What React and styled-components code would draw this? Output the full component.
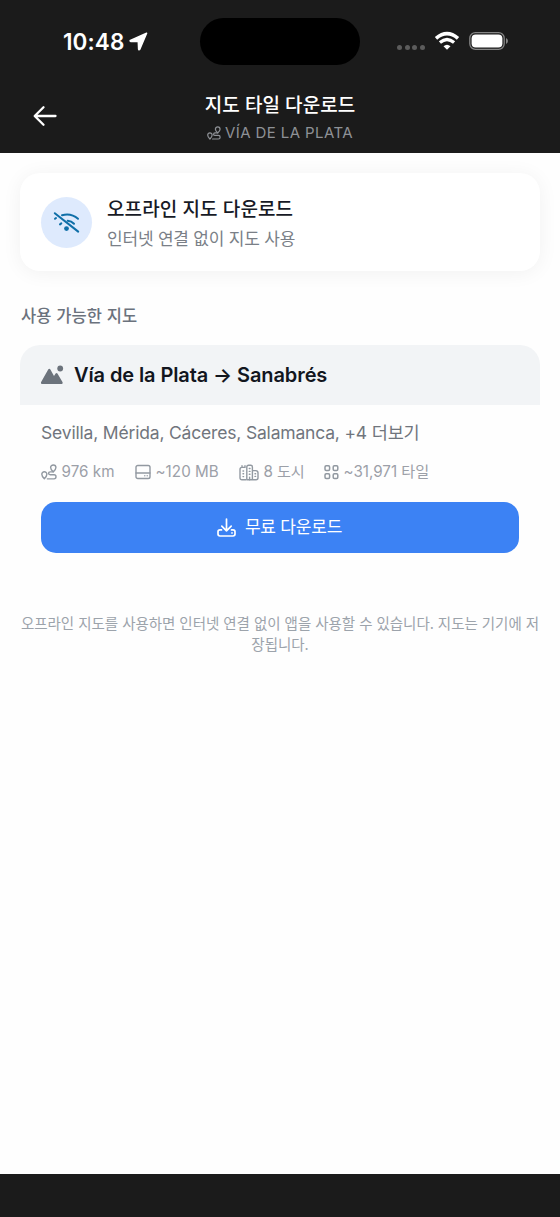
import React from "react";
import styled, { createGlobalStyle } from "styled-components";

const GlobalStyle = createGlobalStyle`
  * {
    box-sizing: border-box;
  }
  body {
    margin: 0;
    background: #ffffff;
    font-family: Inter, "Noto Sans CJK KR", sans-serif;
  }
`;

const Screen = styled.div`
  display: flex;
  flex-direction: column;
  width: 560px;
  height: 1217px;
  background: #fefefe;
`;

const TopArea = styled.header`
  flex: none;
  height: 153px;
  background: #1b1b1b;
  color: #ffffff;
`;

const StatusBar = styled.div`
  display: grid;
  grid-template-columns: 200px 160px 200px;
  align-items: center;
  height: 82px;
`;

const Clock = styled.div`
  display: flex;
  align-items: center;
  gap: 5px;
  padding-left: 63px;
  font-size: 22.5px;
  font-weight: 600;
  letter-spacing: 0.1px;
`;

const Island = styled.div`
  height: 47px;
  border-radius: 24px;
  background: #000000;
`;

const Indicators = styled.div`
  display: flex;
  align-items: center;
  padding-left: 37px;
`;

const Dots = styled.div`
  display: flex;
  gap: 2.7px;
  margin: 12px 9px 0 0;
`;

const Dot = styled.span`
  width: 5px;
  height: 5px;
  border-radius: 50%;
  background: #5c5c5c;
`;

const Battery = styled.div`
  margin-left: 9px;
`;

const NavBar = styled.div`
  display: grid;
  grid-template-columns: 90px 1fr 90px;
  height: 71px;
`;

const BackButton = styled.button`
  display: flex;
  align-items: center;
  justify-content: center;
  height: 68px;
  padding: 0;
  border: 0;
  background: none;
  color: #ffffff;
`;

const NavTitles = styled.div`
  display: flex;
  flex-direction: column;
  align-items: center;
  padding-top: 10px;
`;

const Text = styled.span`
  display: block;
  margin: 0;
  color: ${(props) => props.$color};
  font-size: ${(props) => props.$size}px;
  font-weight: ${(props) => props.$weight || 400};
  line-height: ${(props) => props.$line}px;
  letter-spacing: ${(props) => props.$spacing || 0}px;
  white-space: nowrap;
`;

const RouteName = styled.div`
  display: flex;
  align-items: center;
  gap: 4px;
  margin-top: 2px;
  color: #8e9196;
`;

const Content = styled.main`
  flex: 1;
  padding: 20px 20px 0;
`;

const InfoCard = styled.section`
  display: flex;
  align-items: center;
  gap: 15px;
  height: 98px;
  padding: 0 21px;
  border-radius: 20px;
  background: #ffffff;
  box-shadow: 0 2px 20px rgba(0, 0, 0, 0.055);
`;

const InfoText = styled.div`
  padding-top: 5px;
`;

const IconCircle = styled.div`
  display: flex;
  flex: none;
  align-items: center;
  justify-content: center;
  width: 51px;
  height: 51px;
  border-radius: 50%;
  background: #deeafd;
  color: #0f6fa8;
`;

const SectionTitle = styled.h2`
  margin: 33px 0 16px 1px;
  font-size: 16px;
`;

const MapCard = styled.section`
  overflow: hidden;
  border-radius: 20px;
`;

const MapHeader = styled.div`
  display: flex;
  align-items: center;
  gap: 10px;
  height: 60px;
  padding-left: 20px;
  background: #f2f4f6;
  color: #6c737c;
`;

const MapBody = styled.div`
  padding: 15px 21px 20px;
`;

const Stats = styled.div`
  display: flex;
  align-items: center;
  gap: 20px;
  height: 20px;
  margin: 17px 0 20px;
`;

const Stat = styled.div`
  display: flex;
  align-items: center;
  gap: 4.5px;
  width: ${(props) => props.$width}px;
  color: #9299a1;
`;

const DownloadButton = styled.button`
  display: flex;
  align-items: center;
  justify-content: center;
  gap: 9px;
  width: 100%;
  height: 51px;
  padding: 0 1px 0 0;
  border: 0;
  border-radius: 15px;
  background: #3c82f4;
  color: #ffffff;
  font-family: inherit;
`;

const Note = styled.p`
  margin: 40px -10px 0;
  color: #9ca3ab;
  font-size: 14.5px;
  line-height: 21px;
  letter-spacing: -0.04px;
  text-align: center;
`;

const BottomBar = styled.footer`
  flex: none;
  height: 43px;
  background: #1b1b1b;
`;

const Icon = styled.svg`
  display: block;
  flex: none;
  fill: none;
  stroke: currentColor;
  stroke-linecap: ${(props) => props.$cap || "round"};
  stroke-linejoin: round;
`;

const LocationIcon = () => (
  <Icon width="19" height="19" viewBox="0 0 19 19">
    <path
      d="M17.6 1.2 1.4 8.4Q.6 9.2 1.8 9.4L9.3 9.6 9.6 17Q9.9 18.5 10.8 17.3Z"
      fill="currentColor"
      strokeWidth="1.5"
    />
  </Icon>
);

const WifiIcon = () => (
  <Icon width="26" height="20" viewBox="0 0 26 20" $cap="butt">
    <path d="M2 7.4Q13-2 24 7.4" strokeWidth="3.6" />
    <path d="M5.9 11.6Q13 5.5 20.1 11.6" strokeWidth="3.3" />
    <path
      d="M9.5 15.3Q13 12.2 16.500 15.3L13 18.8Z"
      fill="currentColor"
      stroke="none"
    />
  </Icon>
);

const BatteryIcon = () => (
  <Icon width="40" height="20" viewBox="0 0 40 20">
    <rect x=".8" y="1.6" width="34.4" height="16.8" rx="5.6" stroke="#858585" strokeWidth="1.3" />
    <rect x="2.6" y="3.4" width="30.8" height="13.2" rx="4" fill="#fff" stroke="none" />
    <path d="M37 7Q39 8 39 10T37 13Z" fill="#858585" stroke="none" />
  </Icon>
);

const BackIcon = () => (
  <Icon width="24" height="22" viewBox="0 0 24 22" strokeWidth="2.3">
    <path d="M22.5 11H2M10.5 2.2 1.7 11l8.8 8.8" />
  </Icon>
);

const RouteIcon = ({ size }) => (
  <Icon width={size} height={size} viewBox="0 0 24 24" strokeWidth="2.1">
    <path d="M8.8 15.5C8.8 18 6.9 20.4 5 22.3 3.1 20.4 1.2 18 1.2 15.5a3.8 3.8 0 0 1 7.6 0Z" />
    <path d="M22.4 5.4C22.4 8 20.2 10.2 18.4 11.8c-1.8-1.6-4-3.8-4-6.4a4 4 0 0 1 8 0Z" />
    <path d="M18.4 11.8h-4.6c-3.3 0-3.3 4.3 0 4.3h5.7c4 0 4 6.2 0 6.2H9.5" />
  </Icon>
);

const WifiOffIcon = () => (
  <Icon width="27" height="23" viewBox="0 0 27 23" strokeWidth="2">
    <path d="M1.8 2.2 25.2 20.6" />
    <path d="M9 4.2C14.5 2.7 20.5 3.8 25 7.8" />
    <path d="M14.7 9.8Q18.5 10.2 21 12.800" />
    <path d="M8.3 12.4 7 13.4M3 7 2 7.8" />
    <circle cx="13.5" cy="17.6" r="2.4" fill="currentColor" stroke="none" />
  </Icon>
);

const MountainIcon = () => (
  <Icon width="24" height="20" viewBox="0 0 24 20">
    <path
      d="M1 17.3 8.2 4.6Q9.3 3 10.4 4.6L14 11.1 15.6 8.6Q16.6 7.4 17.6 8.7L22.6 17.3Q23.2 18.9 21.6 18.9H2Q.4 18.9 1 17.3Z"
      fill="currentColor"
      stroke="none"
    />
    <circle cx="20.2" cy="3.5" r="2.9" fill="currentColor" stroke="none" />
  </Icon>
);

const DriveIcon = () => (
  <Icon width="16" height="16" viewBox="0 0 16 16" strokeWidth="1.4">
    <rect x="1" y="1.5" width="14" height="13" rx="1.8" />
    <path d="M1 9h14M9.8 11.8h.01M12.2 11.8h.01" />
  </Icon>
);

const CityIcon = () => (
  <Icon width="20" height="17" viewBox="0 0 20 17" strokeWidth="1.4">
    <path d="M6.7 15.7H3Q1 15.7 1 13.7V5.4Q1 3.4 3 3.4H5.5M3 3.4V1.7M6 3.4V1.7" />
    <path d="M7.8 15.7V3Q7.8 1.3 9.5 1.3h2.2Q13.4 1.3 13.4 3v12.7M13.4 6.6h3.3Q19 6.6 19 8.8v4.9q0 2-2 2H7.8" />
    <path d="M4 7h.6M4 9.8h.6M4 12.6h.6M10.3 4.5h.7M10.3 7.4h.7M10.3 10.3h.7M10.6 15.7v-2.5M16 9.7h.6M16 12.4h.6" />
  </Icon>
);

const TilesIcon = () => (
  <Icon width="15" height="15" viewBox="0 0 15 15" strokeWidth="1.5">
    <rect x="1" y=".8" width="4.6" height="4.6" rx="1.2" />
    <rect x="9.2" y=".8" width="4.6" height="4.6" rx="1.2" />
    <rect x="1" y="8.8" width="4.6" height="4.6" rx="1.2" />
    <rect x="9.2" y="8.8" width="4.6" height="4.6" rx="1.2" />
  </Icon>
);

const DownloadIcon = () => (
  <Icon width="19" height="19" viewBox="0 0 19 19" strokeWidth="1.7">
    <path d="M9.5 1v11.8M4.8 8.2l4.7 4.7L14.2 8.2" />
    <path d="M4.5 11.9H3Q1 11.9 1 13.7v2.4Q1 18 3 18h13q2 0 2-1.9v-2.4q0-1.8-2-1.8h-1.5M15 14.9h.01" />
  </Icon>
);

const stats = [
  { icon: <RouteIcon size={16} />, label: "976 km", width: 74, spacing: 0.05 },
  { icon: <DriveIcon />, label: "~120 MB", width: 84, spacing: 0.05 },
  { icon: <CityIcon />, label: "8 도시", width: 65, spacing: -0.1 },
  { icon: <TilesIcon />, label: "~31,971 타일", width: 108, spacing: 0 },
];

const App = () => (
  <>
    <GlobalStyle />
    <Screen>
      <TopArea>
        <StatusBar>
          <Clock>
            10:48
            <LocationIcon />
          </Clock>
          <Island />
          <Indicators>
            <Dots>
              <Dot />
              <Dot />
              <Dot />
              <Dot />
            </Dots>
            <WifiIcon />
            <Battery>
              <BatteryIcon />
            </Battery>
          </Indicators>
        </StatusBar>
        <NavBar>
          <BackButton aria-label="뒤로">
            <BackIcon />
          </BackButton>
          <NavTitles>
            <Text as="h1" $color="#fff" $size={19} $weight={500} $line={28} $spacing={0.05}>
              지도 타일 다운로드
            </Text>
            <RouteName>
              <RouteIcon size={14} />
              <Text $color="#8e9196" $size={15} $line={22} $spacing={0.4}>
                VÍA DE LA PLATA
              </Text>
            </RouteName>
          </NavTitles>
        </NavBar>
      </TopArea>
      <Content>
        <InfoCard>
          <IconCircle>
            <WifiOffIcon />
          </IconCircle>
          <InfoText>
            <Text $color="#171a26" $size={19} $weight={500} $line={30} $spacing={0.1}>
              오프라인 지도 다운로드
            </Text>
            <Text $color="#7a7f87" $size={17} $line={29} $spacing={-0.2}>
              인터넷 연결 없이 지도 사용
            </Text>
          </InfoText>
        </InfoCard>
        <SectionTitle>
          <Text $color="#6b727d" $size={16.5} $weight={500} $line={25} $spacing={0.15}>
            사용 가능한 지도
          </Text>
        </SectionTitle>
        <MapCard>
          <MapHeader>
            <MountainIcon />
            <Text $color="#12161e" $size={20} $weight={600} $line={28} $spacing={-0.1}>
              Vía de la Plata → Sanabrés
            </Text>
          </MapHeader>
          <MapBody>
            <Text $color="#70757d" $size={17.5} $line={25} $spacing={-0.18}>
              Sevilla, Mérida, Cáceres, Salamanca, +4 더보기
            </Text>
            <Stats>
              {stats.map((stat) => (
                <Stat key={stat.label} $width={stat.width}>
                  {stat.icon}
                  <Text $color="#9ca0a8" $size={15.2} $line={20} $spacing={stat.spacing}>
                    {stat.label}
                  </Text>
                </Stat>
              ))}
            </Stats>
            <DownloadButton>
              <DownloadIcon />
              <Text $color="#fff" $size={17} $line={25} $spacing={-0.2}>
                무료 다운로드
              </Text>
            </DownloadButton>
          </MapBody>
        </MapCard>
        <Note>
          오프라인 지도를 사용하면 인터넷 연결 없이 앱을 사용할 수 있습니다. 지도는 기기에 저
          <br />
          장됩니다.
        </Note>
      </Content>
      <BottomBar />
    </Screen>
  </>
);

export default App;
